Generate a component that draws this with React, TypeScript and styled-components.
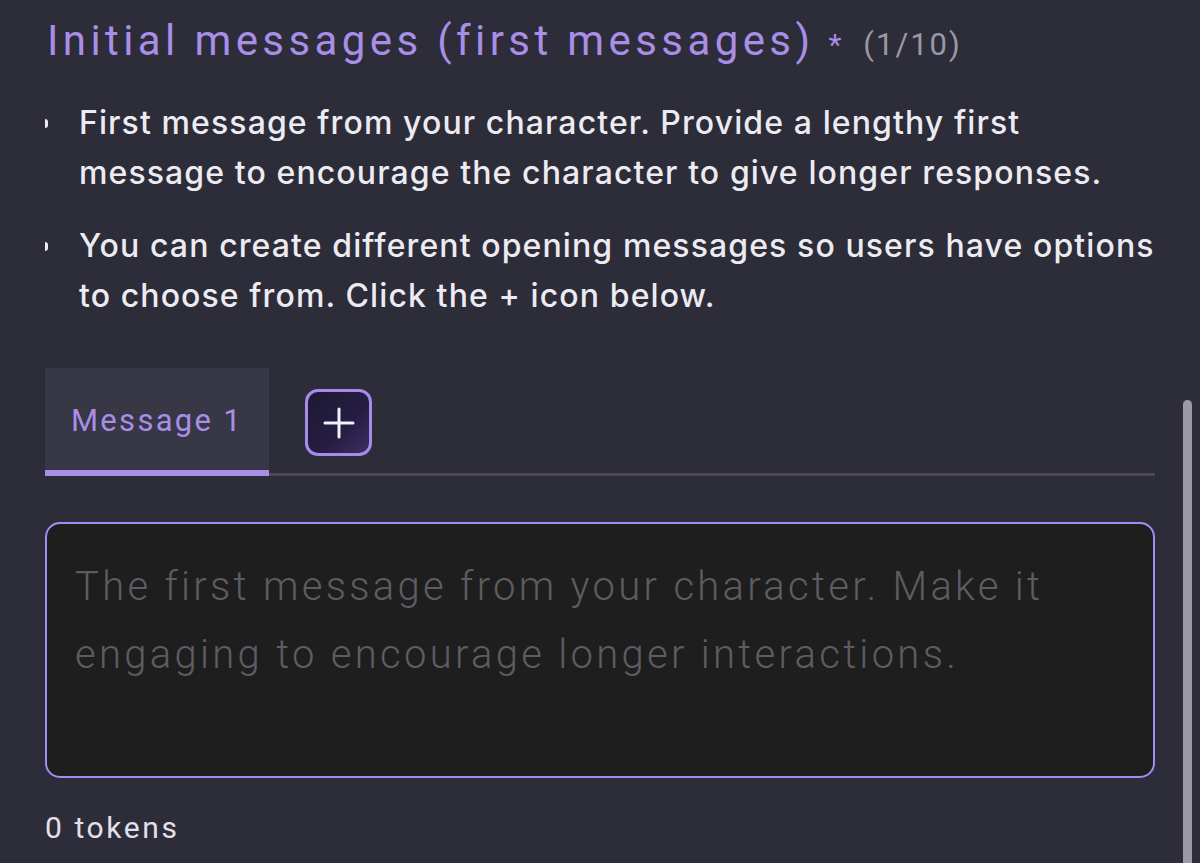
import React from "react";
import styled, { createGlobalStyle } from "styled-components";

const Global = createGlobalStyle`
  html, body { margin: 0; padding: 0; background: #2d2c39; }
  body { width: 1200px; height: 863px; overflow: hidden; }
`;

const Page = styled.div`
  position: relative;
  width: 1200px;
  height: 863px;
  box-sizing: border-box;
  padding: 11px 45px 0 45px;
  background: #2d2c39;
  display: flex;
  flex-direction: column;
`;

const TitleRow = styled.div`
  display: flex;
  align-items: baseline;
  height: 60px;
`;

const Title = styled.h1`
  margin: 0 0 0 2px;
  font-family: "Roboto", sans-serif;
  font-weight: 400;
  font-size: 42px;
  letter-spacing: 4.4px;
  color: #a88ee6;
  line-height: 60px;
  white-space: nowrap;
`;

const Star = styled.span`
  margin-left: 14px;
  font-family: "Roboto", sans-serif;
  font-size: 30px;
  color: #a88ee6;
`;

const Count = styled.span`
  font-family: "Roboto", sans-serif;
  font-size: 31px;
  color: #9a98a6;
  margin-left: 22px;
  letter-spacing: 2px;
`;

const List = styled.ul`
  list-style: none;
  margin: 27px 0 0 0;
  padding: 0;
  display: flex;
  flex-direction: column;
  gap: 23px;
`;

const Item = styled.li`
  display: flex;
  align-items: flex-start;
  font-family: "Inter", sans-serif;
  font-weight: 500;
  font-size: 32px;
  letter-spacing: 1.1px;
  line-height: 50px;
  color: #ecebf2;
  white-space: nowrap;
`;

const Bullet = styled.span`
  flex: 0 0 auto;
  width: 3px;
  height: 9px;
  margin-top: 21px;
  margin-right: 31px;
  border-radius: 0 3px 3px 0;
  background: #ecebf2;
`;

const Tabs = styled.div`
  margin-top: 47px;
  display: flex;
  align-items: stretch;
  border-bottom: 3px solid #4a4954;
  height: 108px;
  box-sizing: border-box;
`;

const Tab = styled.div<{ $active?: boolean }>`
  width: 224px;
  display: flex;
  align-items: center;
  justify-content: center;
  background: ${(p) => (p.$active ? "#383745" : "transparent")};
  border-bottom: 6px solid ${(p) => (p.$active ? "#a88ee6" : "transparent")};
  margin-bottom: -3px;
  font-family: "Roboto", sans-serif;
  font-size: 31px;
  letter-spacing: 2.3px;
  color: #a88ee6;
  box-sizing: border-box;
  padding-top: 2px;
`;

const AddButton = styled.button`
  align-self: flex-start;
  margin: 21px 0 0 36px;
  width: 67px;
  height: 67px;
  box-sizing: border-box;
  border: 3px solid #a68bea;
  border-radius: 13px;
  background: linear-gradient(135deg, #1d1833 0%, #251d42 60%, #3c3163 100%);
  display: flex;
  align-items: center;
  justify-content: center;
  padding: 0;
`;

const TextArea = styled.div`
  margin-top: 46px;
  height: 256px;
  box-sizing: border-box;
  border: 2.5px solid #a28df2;
  border-radius: 15px;
  background: #1e1e1f;
  padding: 29px 28px;
  font-family: "Roboto", sans-serif;
  font-weight: 300;
  font-size: 40px;
  line-height: 68px;
  letter-spacing: 3.3px;
  color: #5d5c61;
  white-space: nowrap;
`;

const Tokens = styled.div`
  margin-top: 32px;
  font-family: "Roboto", sans-serif;
  font-size: 30px;
  letter-spacing: 2.6px;
  color: #e2e0ea;
`;

const Scrollbar = styled.div`
  position: absolute;
  right: 8px;
  top: 400px;
  width: 9px;
  height: 480px;
  border-radius: 5px;
  background: #9b9aa3;
`;

export default function App() {
  return (
    <>
      <Global />
      <Page>
        <TitleRow>
          <Title>Initial messages (first messages)</Title>
          <Star>*</Star>
          <Count>(1/10)</Count>
        </TitleRow>
        <List>
          <Item>
            <Bullet />
            <span>
              First message from your character. Provide a lengthy first
              <br />
              message to encourage the character to give longer responses.
            </span>
          </Item>
          <Item>
            <Bullet />
            <span>
              You can create different opening messages so users have options
              <br />
              to choose from. Click the + icon below.
            </span>
          </Item>
        </List>
        <Tabs>
          <Tab $active>Message 1</Tab>
          <AddButton aria-label="Add message">
            <svg width="34" height="34" viewBox="0 0 34 34">
              <path d="M17 3v28M3 17h28" stroke="#f2f0f8" strokeWidth="3" strokeLinecap="round" />
            </svg>
          </AddButton>
        </Tabs>
        <TextArea>
          The first message from your character. Make it
          <br />
          engaging to encourage longer interactions.
        </TextArea>
        <Tokens>0 tokens</Tokens>
        <Scrollbar />
      </Page>
    </>
  );
}
